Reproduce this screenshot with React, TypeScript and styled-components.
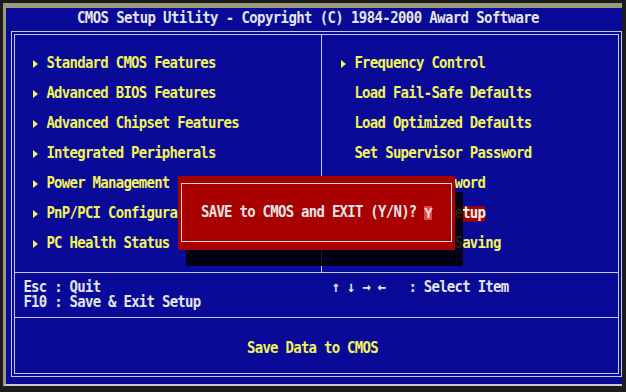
import React from "react";
import styled, { createGlobalStyle } from "styled-components";

const C = {
  blue: "#0a0a98",
  yellow: "#f2f25c",
  white: "#e4e4e4",
  line: "#c8c8de",
  khaki: "#9c9c7c",
  red: "#a80000",
};

const Global = createGlobalStyle`
  html, body { margin: 0; padding: 0; background: #1c1c1c; }
  body {
    width: 626px;
    height: 392px;
    overflow: hidden;
    font-family: "DejaVu Sans Mono", "Liberation Mono", monospace;
  }
`;

const Screen = styled.div`
  position: relative;
  box-sizing: border-box;
  margin: 3px 0 0 3px;
  width: 619px;
  height: 383px;
  background: ${C.blue};
  border-top: 5px solid ${C.khaki};
  border-left: 3px solid ${C.khaki};
  border-bottom: 2px solid #c8c8d4;
  display: flex;
  flex-direction: column;
`;

const Text = styled.span<{ $color?: string }>`
  display: inline-block;
  font-size: 14px;
  line-height: 13px;
  font-weight: bold;
  letter-spacing: -0.73px;
  white-space: pre;
  transform: scaleY(1.1);
  color: ${(p) => p.$color || C.white};
`;

const TitleBar = styled.div`
  height: 23px;
  box-sizing: border-box;
  padding: 0 0 3px 71px;
  display: flex;
  align-items: center;
  color: ${C.white};
  ${Text} { letter-spacing: -0.6px; }
`;

const MainFrame = styled.div`
  box-sizing: border-box;
  margin-left: 5px;
  width: 611px;
  height: 346px;
  border: 4px double ${C.line};
  display: flex;
  flex-direction: column;
`;

const Menu = styled.div`
  height: 237px;
  display: flex;
`;

const MenuColumn = styled.div<{ $pad: number; $divider?: boolean }>`
  box-sizing: border-box;
  ${(p) => (p.$divider ? `width: 307px; border-right: 1px solid ${C.line};` : "flex: 1;")}
  padding: 21px 0 0 ${(p) => p.$pad}px;
  display: flex;
  flex-direction: column;
  gap: 15px;
`;

const Item = styled.div`
  height: 15px;
  display: flex;
  align-items: center;
`;

const ArrowSlot = styled.span`
  width: 15.4px;
  flex: none;
  display: flex;
  align-items: center;
  padding-left: 2px;
  box-sizing: border-box;
`;

const ItemLabel = styled(Text)<{ $selected?: boolean }>`
  color: ${(p) => (p.$selected ? "#f4f4ec" : C.yellow)};
  background: ${(p) => (p.$selected ? C.red : "transparent")};
  line-height: 13.5px;
`;

const Help = styled.div`
  box-sizing: border-box;
  height: 45px;
  border-top: 1px solid ${C.line};
  padding-top: 8px;
  display: grid;
  grid-template-columns: 306px 1fr;
`;

const HelpCell = styled.div<{ $pad: number }>`
  padding-left: ${(p) => p.$pad}px;
  display: flex;
  flex-direction: column;
  align-items: flex-start;
  gap: 2px;
`;

const Description = styled.div`
  flex: 1;
  border-top: 1px solid ${C.line};
  display: flex;
  align-items: center;
  padding: 5px 0 0 232px;
`;

const Dialog = styled.div`
  position: absolute;
  z-index: 2;
  left: 172px;
  top: 168px;
  width: 277px;
  height: 74px;
  box-sizing: border-box;
  background: ${C.red};
  padding: 7px 3px 8px 3px;
  box-shadow: 8px 16px 0 rgba(0, 0, 0, 0.86);
`;

const DialogFrame = styled.div`
  box-sizing: border-box;
  height: 100%;
  border: 1px solid #dcdcdc;
  display: flex;
  align-items: center;
  padding-left: 19px;
`;

const Cursor = styled.span`
  display: inline-block;
  width: 7.7px;
  height: 14px;
  line-height: 14px;
  background: #e04848;
  color: #ffd6d6;
  font-size: 14px;
  font-weight: bold;
  text-align: center;
`;

const Arrow = () => (
  <svg width="5" height="8" viewBox="0 0 5 8">
    <path d="M0 0 L5 4 L0 8 Z" fill={C.yellow} />
  </svg>
);

type MenuEntry = { label: string; sub?: boolean; selected?: boolean };

const left: MenuEntry[] = [
  { label: "Standard CMOS Features", sub: true },
  { label: "Advanced BIOS Features", sub: true },
  { label: "Advanced Chipset Features", sub: true },
  { label: "Integrated Peripherals", sub: true },
  { label: "Power Management Setup", sub: true },
  { label: "PnP/PCI Configurations", sub: true },
  { label: "PC Health Status", sub: true },
];

const right: MenuEntry[] = [
  { label: "Frequency Control", sub: true },
  { label: "Load Fail-Safe Defaults" },
  { label: "Load Optimized Defaults" },
  { label: "Set Supervisor Password" },
  { label: "Set User Password" },
  { label: "Save & Exit Setup", selected: true },
  { label: "Exit Without Saving" },
];

const MenuItems = ({ items }: { items: MenuEntry[] }) => (
  <>
    {items.map((it) => (
      <Item key={it.label}>
        <ArrowSlot>{it.sub ? <Arrow /> : null}</ArrowSlot>
        <ItemLabel $selected={it.selected}>{it.label}</ItemLabel>
      </Item>
    ))}
  </>
);

export default function App() {
  return (
    <>
      <Global />
      <Screen>
        <TitleBar>
          <Text>CMOS Setup Utility - Copyright (C) 1984-2000 Award Software</Text>
        </TitleBar>
        <MainFrame>
          <Menu>
            <MenuColumn $pad={16} $divider>
              <MenuItems items={left} />
            </MenuColumn>
            <MenuColumn $pad={17}>
              <MenuItems items={right} />
            </MenuColumn>
          </Menu>
          <Help>
            <HelpCell $pad={8.4}>
              <Text>Esc : Quit</Text>
              <Text>F10 : Save &amp; Exit Setup</Text>
            </HelpCell>
            <HelpCell $pad={10.4}>
              <Text>{"↑ ↓ → ←   : Select Item"}</Text>
            </HelpCell>
          </Help>
          <Description>
            <Text $color={C.yellow}>Save Data to CMOS</Text>
          </Description>
        </MainFrame>
        <Dialog>
          <DialogFrame>
            <Text>SAVE to CMOS and EXIT (Y/N)? </Text>
            <Cursor>Y</Cursor>
          </DialogFrame>
        </Dialog>
      </Screen>
    </>
  );
}
